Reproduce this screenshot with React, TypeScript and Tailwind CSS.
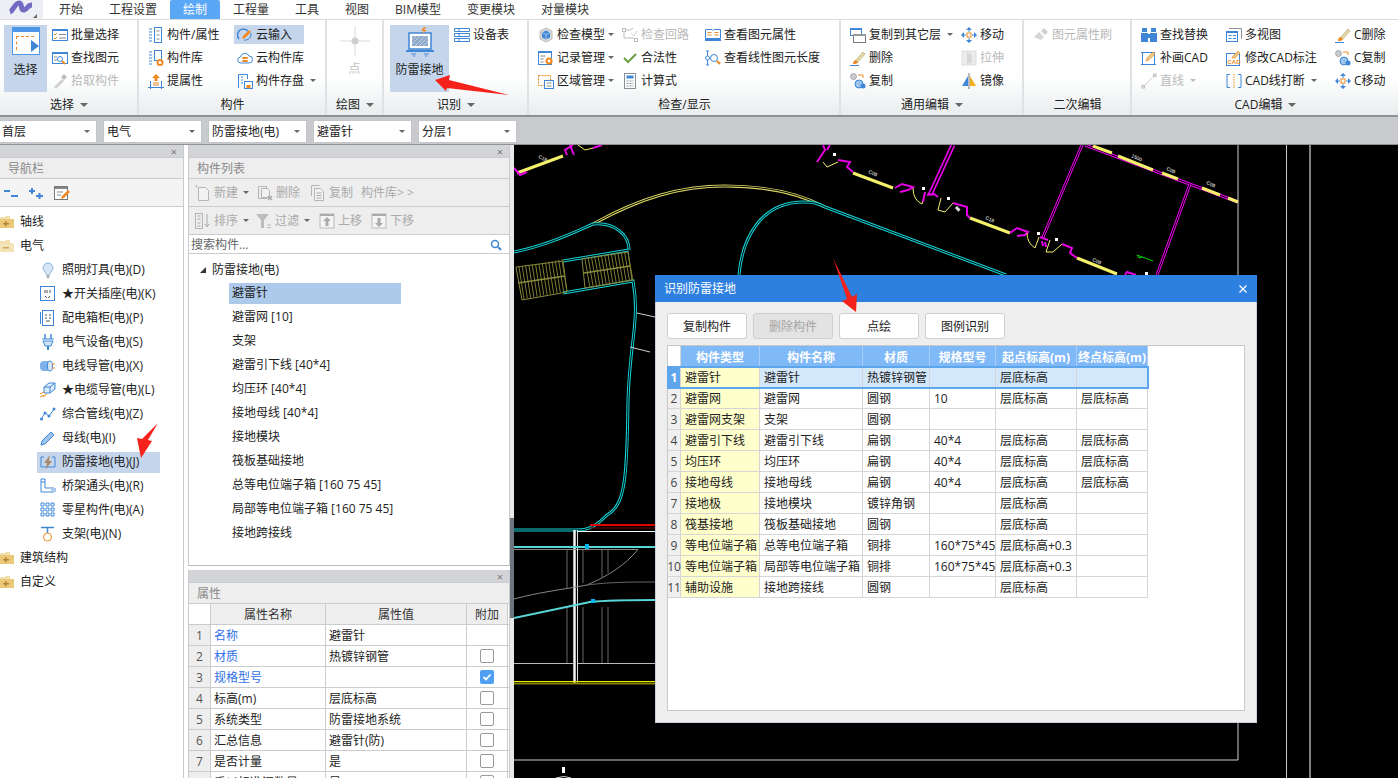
import type { ReactNode } from 'react'

const B = '#3f87d6'
const O = '#ef8a22'
const G = '#bdbdbd'

function S({ children, s = 16 }: { children: ReactNode; s?: number }) {
  return (
    <svg width={s} height={s} viewBox="0 0 16 16" fill="none" className="shrink-0">
      {children}
    </svg>
  )
}

const Move = (
  <S>
    <path d="M8 0l3 3H5zM8 16l-3-3h6zM0 8l3-3v6zM16 8l-3 3V5z" fill={B} />
    <rect x="6" y="6" width="4" height="4" stroke={O} />
    <path d="M3 8h2M11 8h2M8 3v2M8 11v2" stroke={B} />
  </S>
)
const Brush = (
  <S>
    <path d="M5 11L13 2l2 2-8 9z" fill="#e8d9a8" stroke="#a89a70" strokeWidth=".6" />
    <path d="M3 14c0-2 1-4 3-4l2 2c-1 2-3 2-5 2z" fill={O} />
    <path d="M0 15.500h9" stroke={B} />
  </S>
)
const CopyC = (
  <S>
    <circle cx="3.500" cy="3.500" r="3" fill="#c9ccd0" stroke="#888" strokeWidth=".6" />
    <circle cx="9" cy="11" r="4" fill="#9cc4ec" stroke={B} />
    <circle cx="13" cy="13" r="2.500" fill={B} />
    <path d="M8 2h5v3" stroke={O} />
  </S>
)

const icons: Record<string, ReactNode> = {
  batch: (
    <S>
      <rect x=".5" y="2.500" width="15" height="11" fill="#fff" stroke={B} />
      <rect y="2" width="16" height="2" fill={B} />
      <path d="M2 7l1 1 2-2M2 11l1 1 2-2" stroke={O} />
      <path d="M7 7.500h7M7 11h7" stroke="#888" />
    </S>
  ),
  find: (
    <S>
      <rect x=".5" y="2.500" width="15" height="11" fill="#fff" stroke={B} />
      <rect y="2" width="16" height="2" fill={B} />
      <circle cx="8" cy="9" r="2.500" stroke={B} />
      <path d="M10 11l3 3" stroke={O} strokeWidth="2" />
      <path d="M2 7h3M2 10h3" stroke="#888" />
    </S>
  ),
  picker: (
    <S>
      <path d="M2 14l8-8 2 2-8 8z" fill="#d0d0d0" />
      <path d="M9 4l3-3 3 3-3 3z" fill={G} />
    </S>
  ),
  attr: (
    <S>
      <path d="M1 2h3M1 5h3M1 8h3M1 11h3M1 14h3" stroke={B} />
      <rect x="6.500" y=".5" width="7" height="15" stroke={B} />
      <path d="M8.500 4h3M8.500 8h3M8.500 12h3" stroke="#888" />
    </S>
  ),
  lib: (
    <S>
      <path d="M1 2h3M1 5h3M1 8h3M1 11h3M1 14h3" stroke={B} />
      <rect x="6.500" y=".5" width="7" height="10" stroke={B} />
      <circle cx="12" cy="12.500" r="2.500" stroke={O} strokeWidth="2" />
    </S>
  ),
  lift: (
    <S>
      <path d="M8 1l4 4H9.500v3h-3V5H4z" fill={O} />
      <path d="M5 10h6M5 12h6" stroke={O} />
      <path d="M0 14.500h16M2.500 8v8M13.500 8v8" stroke={B} />
    </S>
  ),
  cloudIn: (
    <S>
      <path d="M2 12a6 6 0 0 1 9-8" stroke={B} strokeWidth="1.500" />
      <path d="M14 6a6 6 0 0 1-7 7" stroke={B} />
      <path d="M5 12l1-3 6-6 2 2-6 6z" fill={O} />
    </S>
  ),
  cloudLib: (
    <S>
      <path d="M4 13a3 3 0 0 1-.5-6A4.500 4.500 0 0 1 12 6a3.500 3.500 0 0 1 0 7z" fill="#fff" stroke={B} />
      <rect x="5" y="7" width="6" height="2" rx="1" fill={O} />
      <rect x="5" y="10" width="6" height="2" rx="1" fill={O} />
    </S>
  ),
  save: (
    <S>
      <path d="M1.500 15V1.500h9V6" stroke={B} />
      <path d="M4 4h2M4 7h2M4 10h2" stroke={B} />
      <rect x="7.500" y="8.500" width="8" height="7" fill="#fff" stroke={B} />
      <rect x="9.500" y="12" width="4" height="3" fill={O} />
    </S>
  ),
  device: (
    <S>
      <path d="M.5 1.500h15v3H.5zM.5 6.500h15v3H.5zM.5 11.500h15v3H.5z" stroke={B} />
      <path d="M5 1.500v3M5 6.500v3M5 11.500v3" stroke={B} />
    </S>
  ),
  cube: (
    <S>
      <path d="M8 1l6 3v8l-6 3-6-3V4z" fill="#d5d8dc" stroke={G} />
      <path d="M8 3.500l4 2v5l-4 2-4-2v-5z" fill={B} />
      <path d="M4 5.500l4 2 4-2M8 7.500v5" stroke="#cfe2f7" strokeWidth=".7" />
    </S>
  ),
  loop: (
    <S>
      <rect x=".5" y="1.500" width="3" height="3" stroke={G} />
      <rect x="12.500" y="11.500" width="3" height="3" stroke={G} />
      <path d="M3.500 3H8l3-2M2 5v6h10" stroke={G} />
      <path d="M9 6l3 3 3-5" stroke="#d5d5d5" />
    </S>
  ),
  book: (
    <S>
      <path d="M.5 2.500h6.500l1 1 1-1h6.500v9H.5z" fill="#fff" stroke={B} />
      <path d="M2.500 5.500h4M2.500 8h4M9.500 5.500h4M9.500 8h4" stroke={O} />
      <path d="M0 13h16" stroke={B} strokeWidth="2" />
    </S>
  ),
  record: (
    <S>
      <rect x=".5" y="1.500" width="13" height="13" fill="#fff" stroke={B} />
      <rect y="1" width="14" height="2" fill={B} />
      <path d="M2.500 6h5M2.500 9h3M2.500 12h3" stroke="#888" />
      <circle cx="11" cy="11" r="2.500" stroke={O} strokeWidth="2.200" />
    </S>
  ),
  check: (
    <S>
      <path d="M2 8l4 4 8-8" stroke="#6e9f45" strokeWidth="2" />
    </S>
  ),
  lineLen: (
    <S>
      <circle cx="2.500" cy="8" r="2" stroke={B} />
      <path d="M2.500 1v5M2.500 10v5M1 1h3M1 15h3" stroke={B} />
      <circle cx="9" cy="8" r="3.500" stroke={B} />
      <path d="M12 11l3 3" stroke={O} strokeWidth="2.200" />
    </S>
  ),
  area: (
    <S>
      <rect x=".5" y="2.500" width="12" height="10" stroke={O} strokeDasharray="2 1" />
      <rect x="6.500" y="7.500" width="9" height="8" fill="#fff" stroke={B} />
      <path d="M8.500 10h5M8.500 13h5" stroke="#888" />
    </S>
  ),
  calc: (
    <S>
      <rect x="2.500" y=".5" width="11" height="15" fill="#fff" stroke="#8a9098" />
      <rect x="4.500" y="2.500" width="7" height="3" fill={B} />
      <path d="M4.500 8h2M7.500 8h2M10.500 8h1M4.500 10.500h2M7.500 10.500h2M10.500 10.500h1M4.500 13h2M7.500 13h2M10.500 13h1" stroke="#8a9098" />
    </S>
  ),
  copyLayer: (
    <S>
      <rect x=".5" y="1.500" width="11" height="7" fill="#fff" stroke={B} />
      <rect y="1" width="12" height="2" fill={B} />
      <rect x="3.500" y="7.500" width="12" height="8" fill="#fff" stroke="#777" />
      <rect x="3" y="7" width="13" height="2" fill="#999" />
    </S>
  ),
  move: Move,
  brush: Brush,
  stretch: (
    <S>
      <rect x="1" y="1" width="14" height="14" fill="#ececec" stroke="#ddd" />
      <path d="M6 2l5 3v8l-5 1z" fill="#d8d8d8" />
    </S>
  ),
  copy: CopyC,
  mirror: (
    <S>
      <path d="M7 3v10H1z" fill={B} />
      <path d="M9 3v10h6z" fill="#f1ae1c" />
      <path d="M8 0v16" stroke="#777" />
    </S>
  ),
  paint: (
    <S>
      <path d="M1 10l5-5 5 5-3 3z" fill="#d6d6d6" />
      <path d="M8 4l3-3 4 4-3 3z" fill="#cfcfcf" />
    </S>
  ),
  replace: (
    <S>
      <rect x="1" y="1" width="5" height="4" fill={B} />
      <rect x="10" y="1" width="5" height="4" fill={B} />
      <rect x="0" y="6" width="7" height="9" fill={B} />
      <rect x="9" y="6" width="7" height="9" fill={B} />
      <rect x="6" y="7" width="4" height="4" fill={B} />
    </S>
  ),
  multi: (
    <S>
      <rect x=".5" y="4.500" width="11" height="10" fill="#fff" stroke={B} />
      <rect y="4" width="12" height="2" fill={B} />
      <path d="M3 1.500h12.500V12" stroke="#8a9098" />
      <path d="M2.500 8.500h3M2.500 11.500h3M7 8.500h3M7 11.500h3" stroke={B} />
    </S>
  ),
  patch: (
    <S>
      <rect x="1.500" y="2.500" width="12" height="12" stroke={B} />
      <path d="M0 2.500h3M0 14.500h3M12 14.500h3" stroke={B} />
      <path d="M5 11l1-3 6-6 2 2-6 6z" fill="#e8c887" stroke={O} strokeWidth=".6" />
    </S>
  ),
  editCad: (
    <S>
      <rect x=".5" y="3.500" width="13" height="12" fill="#fff" stroke={B} />
      <path d="M6 8l1-2 5-5 2 2-5 5z" fill="#e8c887" stroke={O} strokeWidth=".6" />
      <text x="1.500" y="14" fontSize="6" fontWeight="700" fill={O} fontFamily="Liberation Sans">CAD</text>
    </S>
  ),
  breakLine: (
    <S>
      <path d="M4 1.500H1v13h3M12 1.500h3v13h-3" stroke={B} />
      <path d="M8 1v14" stroke={O} strokeDasharray="1.500 1" />
    </S>
  ),
  line: (
    <S>
      <path d="M2 14L14 2" stroke="#cfcfcf" />
      <rect x="1" y="12.500" width="2.500" height="2.500" stroke={G} />
      <rect x="12.500" y="1" width="2.500" height="2.500" stroke={G} />
    </S>
  ),
  bulb: (
    <S>
      <path d="M8 1a5 5 0 0 0-3 9c1 1 1 2 1.500 3h3c.5-1 .5-2 1.500-3a5 5 0 0 0-3-9z" fill="#d7e6f7" stroke="#8db4dc" />
      <path d="M6.500 14h3M7 15.500h2" stroke="#888" />
    </S>
  ),
  socket: (
    <S>
      <rect x=".5" y=".5" width="14" height="14" fill="#fff" stroke={B} />
      <path d="M5 4v3M7 4v3M10 4v3M5 10l2 2M10 10l-2 2" stroke="#555" />
    </S>
  ),
  box: (
    <S>
      <rect x="2.500" y=".5" width="11" height="15" fill="#fff" stroke={B} />
      <path d="M0.500 2v12" stroke={B} />
      <path d="M5 5h2M9 5h2M5 8h2M9 8h2M6 11h4" stroke="#555" />
    </S>
  ),
  plug: (
    <S>
      <path d="M5 0v5M11 0v5" stroke={B} strokeWidth="1.500" />
      <path d="M2 5h12M3 7h10l-2 5H5z" stroke={B} fill="#cfe2f7" />
      <path d="M8 12v4" stroke={B} strokeWidth="2" />
    </S>
  ),
  conduit: (
    <S>
      <rect x="0" y="3" width="11" height="10" rx="4" fill="#7fb2e8" />
      <ellipse cx="10" cy="8" rx="2.500" ry="5" fill="#dbe9f8" stroke={B} />
      <path d="M12 6h3M12 10h3" stroke={O} />
    </S>
  ),
  cable: (
    <S>
      <path d="M4 5l5-4h6v6l-5 4H4z" fill="#dbe9f8" stroke={B} />
      <path d="M4 5h6v6M10 5l5-4" stroke={B} />
      <path d="M0 15l4-2M0 12l4-2M3 15l4-3" stroke={O} />
    </S>
  ),
  poly: (
    <S>
      <path d="M1 13l4-6 4 3 5-7" stroke={B} />
      <circle cx="1.500" cy="13" r="1.500" fill={B} />
      <circle cx="5" cy="7" r="1.500" fill={B} />
      <circle cx="9" cy="10" r="1.500" fill={B} />
      <circle cx="14" cy="3" r="1.500" fill={B} />
    </S>
  ),
  pen: (
    <S>
      <path d="M1 15l1-4 9-9 3 3-9 9z" fill="#9cc4ec" stroke={B} />
    </S>
  ),
  ground: (
    <S>
      <path d="M1 3h3M12 3h3M1 3v10h14V3" stroke={B} />
      <path d="M10 1L4 9h3l-1 6 6-8H9z" fill="#a98a6a" />
    </S>
  ),
  bridge: (
    <S>
      <path d="M1 1h4v9h9v4H1z" stroke={B} fill="#fff" />
      <path d="M1 4h4M12 10v4" stroke={B} />
      <rect x="11" y="10" width="5" height="4" fill="#a8c9ec" />
    </S>
  ),
  grid: (
    <S>
      <path d="M1 1h3v3H1zM6 1h3v3H6zM11 1h3v3h-3zM1 6h3v3H1zM6 6h3v3H6zM11 6h3v3h-3zM1 11h3v3H1zM6 11h3v3H6zM11 11h3v3h-3z" stroke={B} />
    </S>
  ),
  support: (
    <S>
      <path d="M1 1.500h13M7.500 2v5" stroke={B} strokeWidth="1.500" />
      <circle cx="7.500" cy="11" r="4" stroke={O} />
    </S>
  ),
  newDoc: (
    <S>
      <path d="M3.500 2.500h7l3 3v10h-10z" fill="#f2f2f2" stroke="#b5b5b5" />
      <path d="M0 1h3M1.500 0v3" stroke="#c5c5c5" />
    </S>
  ),
  delDoc: (
    <S>
      <path d="M1.500 1.500h8v12h-8z" stroke="#b5b5b5" />
      <path d="M4.500 3.500h6l2 2v7h-8z" fill="#f2f2f2" stroke="#b5b5b5" />
      <path d="M11 11l4 4M15 11l-4 4" stroke="#aaa" strokeWidth="1.500" />
    </S>
  ),
  copyDoc: (
    <S>
      <path d="M1.500 11V.5h8" stroke="#b5b5b5" />
      <path d="M4.500 3.500h6l3 3v9h-9z" fill="#f2f2f2" stroke="#b5b5b5" />
      <path d="M6.500 8h5M6.500 10.500h5M6.500 13h5" stroke="#aaa" />
    </S>
  ),
  sort: (
    <S>
      <rect x=".5" y=".5" width="7" height="15" stroke="#b5b5b5" />
      <path d="M2.500 3h3M2.500 6h3M2.500 10h3M2.500 13h3" stroke="#aaa" />
      <path d="M12 1v12M10 11l2 3 2-3" stroke="#aaa" />
    </S>
  ),
  filter: (
    <S>
      <path d="M0 1h13L8 7v8H5V7z" fill="#bcbcbc" />
      <path d="M11 12h4M11 14.500h4" stroke="#bbb" />
    </S>
  ),
  up: (
    <S>
      <rect x="1" y="1" width="14" height="14" fill="#f5f5f5" stroke="#bbb" />
      <rect x="1" y="1" width="14" height="2" fill="#aaa" />
      <path d="M8 4l4 4H9.500v5h-3V8H4z" fill="#aaa" />
    </S>
  ),
  down: (
    <S>
      <rect x="1" y="1" width="14" height="14" fill="#f5f5f5" stroke="#bbb" />
      <rect x="1" y="1" width="14" height="2" fill="#aaa" />
      <path d="M8 14l4-4H9.500V5h-3v5H4z" fill="#aaa" />
    </S>
  ),
}

function Caret({ light, big }: { light?: boolean; big?: boolean }) {
  return (
    <span
      className={`inline-block h-0 w-0 border-x-transparent ${big ? 'border-x-[4px] border-t-[4px]' : 'border-x-[3px] border-t-[3px]'} ${
        light ? 'border-t-[#bbb]' : 'border-t-[#666]'
      }`}
    />
  )
}

type ItemProps = { icon: string; label: string; off?: boolean; caret?: boolean; near?: boolean; active?: boolean }

function Item({ icon, label, off, caret, near, active }: ItemProps) {
  return (
    <div className={`flex h-[23px] items-center whitespace-nowrap ${off ? 'text-[#b9b9b9]' : 'text-[#222]'}`}>
      <div className={`flex h-[19px] items-center gap-[3px] ${active ? '-ml-[3px] w-[70px] bg-[#c5d6ec] pl-[3px]' : ''}`}>
        {icons[icon]}
        <span>{label}</span>
        {caret && (
          <span className={`flex items-center ${near ? 'ml-0' : 'ml-[3px]'}`}>
            <Caret light={off} />
          </span>
        )}
      </div>
    </div>
  )
}

function Group({ title, caret, className, children }: { title: string; caret?: boolean; className: string; children: ReactNode }) {
  return (
    <div className={`flex shrink-0 flex-col ${className}`}>
      <div className="flex flex-1 pt-[3px]">{children}</div>
      <div className="-mr-[1px] flex h-[23px] items-center justify-center gap-[6px] pt-[3px] text-[#222]">
        {title}
        {caret && <Caret big />}
      </div>
    </div>
  )
}

function BigButton({ label, className, children }: { label: string; className: string; children: ReactNode }) {
  return (
    <div className={`mt-[2px] flex h-[67px] flex-col items-center bg-[#c5d6ec] ${className}`}>
      {children}
      <span className="mt-auto mb-[16px] text-[#222]">{label}</span>
    </div>
  )
}

function Ribbon() {
  const divider = 'border-r-2 border-r-[#dfe2e4]'
  return (
    <div className="flex h-[97px] border-b-2 border-b-[#8f9193] bg-gradient-to-b from-white from-60% to-[#e9edee]">
      <Group title="选择" caret className={`w-[139px] ${divider}`}>
        <BigButton label="选择" className="ml-[4px] w-[43px]">
          <div className="mt-[2px] h-[28px] w-[28px] border border-[#4d97e6] bg-white">
            <div className="h-[4px] bg-[#4d97e6]" />
            <div className="relative mt-[4px] ml-[3px] h-[14px] w-[18px] border-t border-l border-dashed border-[#ef8a22]">
              <div className="absolute top-[3px] left-[14px] h-0 w-0 border-y-[6px] border-l-[8px] border-y-transparent border-l-[#3f87d6]" />
            </div>
          </div>
        </BigButton>
        <div className="ml-[5px]">
          <Item icon="batch" label="批量选择" />
          <Item icon="find" label="查找图元" />
          <Item icon="picker" label="拾取构件" off />
        </div>
      </Group>
      <Group title="构件" className={`w-[188px] ${divider}`}>
        <div className="ml-[9px] w-[89px]">
          <Item icon="attr" label="构件/属性" />
          <Item icon="lib" label="构件库" />
          <Item icon="lift" label="提属性" />
        </div>
        <div>
          <Item icon="cloudIn" label="云输入" active />
          <Item icon="cloudLib" label="云构件库" />
          <Item icon="save" label="构件存盘" caret />
        </div>
      </Group>
      <Group title="绘图" caret className={`w-[57px] ${divider}`}>
        <div className="flex w-full flex-col items-center pt-[3px]">
          <svg width="30" height="30" viewBox="0 0 30 30" fill="none">
            <path d="M15 0v30M0 15h30" stroke="#d9d9d9" />
            <circle cx="15" cy="15" r="3.500" fill="#cfcfcf" />
          </svg>
          <span className="mt-[7px] text-[#c4c4c4]">点</span>
        </div>
      </Group>
      <Group title="识别" caret className={`w-[145px] ${divider}`}>
        <BigButton label="防雷接地" className="ml-[6px] w-[59px]">
          <svg width="30" height="30" viewBox="0 0 30 30" fill="none" className="mt-[2px]">
            <path d="M4 6h22v16H4z" fill="#fff" stroke="#3f87d6" strokeWidth="1.500" />
            <path d="M7 9h16v10H7z" fill="#8fa9c9" />
            <path d="M7 13l4-4M7 17l8-8M10 19l10-10M14 19l9-9M18 19l5-5" stroke="#cfdcec" strokeWidth=".8" />
            <path d="M1 23h28v2H1z" fill="#3f87d6" />
            <path d="M6 27h5M19 27h5M8 29h2M20 29h2" stroke="#3f87d6" />
            <path d="M19 0l-3 4h3l-2 3 5-4h-3l2-3z" fill="#ef8a22" />
          </svg>
        </BigButton>
        <div className="ml-[5px]">
          <Item icon="device" label="设备表" />
        </div>
      </Group>
      <Group title="检查/显示" className={`w-[312px] ${divider}`}>
        <div className="ml-[9px] w-[84px]">
          <Item icon="cube" label="检查模型" caret near />
          <Item icon="record" label="记录管理" caret near />
          <Item icon="area" label="区域管理" caret near />
        </div>
        <div className="w-[83px]">
          <Item icon="loop" label="检查回路" off />
          <Item icon="check" label="合法性" />
          <Item icon="calc" label="计算式" />
        </div>
        <div>
          <Item icon="book" label="查看图元属性" />
          <Item icon="lineLen" label="查看线性图元长度" />
        </div>
      </Group>
      <Group title="通用编辑" caret className={`w-[183px] ${divider}`}>
        <div className="ml-[9px] w-[111px]">
          <Item icon="copyLayer" label="复制到其它层" caret />
          <Item icon="brush" label="删除" />
          <Item icon="copy" label="复制" />
        </div>
        <div>
          <Item icon="move" label="移动" />
          <Item icon="stretch" label="拉伸" off />
          <Item icon="mirror" label="镜像" />
        </div>
      </Group>
      <Group title="二次编辑" className={`w-[108px] ${divider}`}>
        <div className="ml-[9px]">
          <Item icon="paint" label="图元属性刷" off />
        </div>
      </Group>
      <Group title="CAD编辑" caret className="w-[266px]">
        <div className="ml-[9px] w-[85px]">
          <Item icon="replace" label="查找替换" />
          <Item icon="patch" label="补画CAD" />
          <Item icon="line" label="直线" off caret />
        </div>
        <div className="w-[109px]">
          <Item icon="multi" label="多视图" />
          <Item icon="editCad" label="修改CAD标注" />
          <Item icon="breakLine" label="CAD线打断" caret />
        </div>
        <div>
          <Item icon="brush" label="C删除" />
          <Item icon="copy" label="C复制" />
          <Item icon="move" label="C移动" />
        </div>
      </Group>
    </div>
  )
}

function Select({ label }: { label: string }) {
  return (
    <div className="flex h-[23px] w-[99px] items-center justify-between border border-[#c3c5c8] bg-white pr-[6px] pl-[3px] text-[#222]">
      {label}
      <Caret />
    </div>
  )
}

function PanelHead({ title }: { title: string }) {
  return (
    <>
      <div className="flex h-[12px] shrink-0 items-center justify-end bg-[#d2d4d8] pr-[6px] text-[11px] leading-none text-[#777]">×</div>
      <div className="flex h-[22px] shrink-0 items-center border-y border-y-[#c9cbce] bg-[#eeeeee] pt-[2px] pl-[8px] text-[#8a8a8a]">{title}</div>
    </>
  )
}

function Folder({ open }: { open?: boolean }) {
  return (
    <svg width="15" height="14" viewBox="0 0 15 14" className="shrink-0">
      <path d="M0 2h5l1-1h4v3H0z" fill="#f3dfae" />
      <path d="M0 4h14v9H0z" fill={open ? '#f5e3b8' : '#ecc879'} />
      <path d={open ? 'M3 8h6v1.500H3z' : 'M3 8h6v1.500H3zM5.200 6h1.500v5.500H5.200z'} fill={open ? '#c9a45a' : '#b5863a'} />
    </svg>
  )
}

const navRows = [
  ['bulb', '照明灯具(电)(D)'],
  ['socket', '★开关插座(电)(K)'],
  ['box', '配电箱柜(电)(P)'],
  ['plug', '电气设备(电)(S)'],
  ['conduit', '电线导管(电)(X)'],
  ['cable', '★电缆导管(电)(L)'],
  ['poly', '综合管线(电)(Z)'],
  ['pen', '母线(电)(I)'],
  ['ground', '防雷接地(电)(J)'],
  ['bridge', '桥架通头(电)(R)'],
  ['grid', '零星构件(电)(A)'],
  ['support', '支架(电)(N)'],
]

function FolderRow({ label, open }: { label: string; open?: boolean }) {
  return (
    <div className="flex h-[24px] items-center gap-[5px]">
      <Folder open={open} />
      {label}
    </div>
  )
}

function NavPanel() {
  return (
    <div className="flex w-[184px] shrink-0 flex-col border-r border-r-[#c9cbce] bg-white">
      <PanelHead title="导航栏" />
      <div className="flex h-[28px] shrink-0 items-center gap-[8px] border-b border-b-[#c9cbce] bg-[#f4f4f4] pl-[4px]">
        <svg width="15" height="12" viewBox="0 0 15 12"><path d="M0 3h6v2H0zM7 8h7v2H7z" fill="#3f87d6" /></svg>
        <svg width="15" height="12" viewBox="0 0 15 12" className="ml-[2px]"><path d="M0 3h6v2H0zM2 1h2v6H2zM7 8h7v2H7zM9.500 6h2v6h-2z" fill="#3f87d6" /></svg>
        <svg width="16" height="14" viewBox="0 0 16 14" className="ml-[2px]"><rect x=".5" y=".5" width="13" height="13" fill="#fff" stroke="#777" /><path d="M1 1h12v2H1z" fill="#888" /><path d="M3 6h6M3 9h4" stroke="#888" /><path d="M7 13l1-3 6-6 2 2-6 6z" fill="#ef8a22" /></svg>
      </div>
      <div className="pt-[3px] text-[#222]">
        <FolderRow label="轴线" />
        <FolderRow label="电气" open />
        {navRows.map(([icon, label], i) => (
          <div key={label} className="flex h-[24px] items-center pl-[37px]">
            <div className={`flex h-[21px] w-[123px] items-center gap-[7px] pl-[4px] whitespace-nowrap ${i === 8 ? 'bg-[#c5d6ec]' : ''}`}>
              <span className="flex w-[14px] justify-center">{icons[icon]}</span>
              {label}
            </div>
          </div>
        ))}
        <FolderRow label="建筑结构" />
        <FolderRow label="自定义" />
      </div>
    </div>
  )
}

function Tool({ icon, label, caret, className }: { icon?: string; label: string; caret?: boolean; className: string }) {
  return (
    <div className={`flex items-center gap-[3px] whitespace-nowrap text-[#aaa] ${className}`}>
      {icon && icons[icon]}
      {label}
      {caret && <span className="ml-[2px] flex"><Caret /></span>}
    </div>
  )
}

const compRows = [
  '避雷针',
  '避雷网 [10]',
  '支架',
  '避雷引下线 [40*4]',
  '均压环 [40*4]',
  '接地母线 [40*4]',
  '接地模块',
  '筏板基础接地',
  '总等电位端子箱 [160 75 45]',
  '局部等电位端子箱 [160 75 45]',
  '接地跨接线',
]

function ComponentPanel() {
  return (
    <div className="flex h-[421px] shrink-0 flex-col border-x border-b border-x-[#c9cbce] border-b-[#b9bbbe] bg-white">
      <PanelHead title="构件列表" />
      <div className="flex h-[28px] shrink-0 items-center border-b border-b-[#c9cbce] bg-[#eeeeee] pl-[6px]">
        <Tool icon="newDoc" label="新建" caret className="" />
        <Tool icon="delDoc" label="删除" className="ml-[8px]" />
        <Tool icon="copyDoc" label="复制" className="ml-[10px]" />
        <Tool label="构件库> >" className="ml-[8px]" />
      </div>
      <div className="flex h-[28px] shrink-0 items-center border-b border-b-[#c9cbce] bg-[#eeeeee] pl-[6px]">
        <Tool icon="sort" label="排序" caret className="" />
        <Tool icon="filter" label="过滤" caret className="ml-[7px]" />
        <Tool icon="up" label="上移" className="ml-[9px]" />
        <Tool icon="down" label="下移" className="ml-[9px]" />
      </div>
      <div className="flex h-[19px] shrink-0 items-center justify-between border-b border-b-[#c9cbce] bg-white pt-[1px] pr-[7px] pl-[2px] text-[#666]">
        搜索构件...
        <svg width="12" height="12" viewBox="0 0 12 12" fill="none"><circle cx="5" cy="5" r="3.500" stroke="#3f87d6" strokeWidth="1.500" /><path d="M8 8l3 3" stroke="#3f87d6" strokeWidth="2" /></svg>
      </div>
      <div className="pt-[4px] text-[#222]">
        <div className="flex h-[23px] items-center pl-[11px]">
          <span className="mr-[6px] h-0 w-0 border-b-[6px] border-l-[6px] border-b-[#333] border-l-transparent" />
          防雷接地(电)
        </div>
        {compRows.map((label, i) => (
          <div key={label} className="flex h-[24px] items-center pl-[40px]">
            <div className={`flex h-[21px] w-[172px] items-center pl-[3px] whitespace-nowrap ${i === 0 ? 'bg-[#aecaea]' : ''}`}>{label}</div>
          </div>
        ))}
      </div>
    </div>
  )
}

const propRows = [
  ['名称', '避雷针', ''],
  ['材质', '热镀锌钢管', 'off'],
  ['规格型号', '', 'on'],
  ['标高(m)', '层底标高', 'off'],
  ['系统类型', '防雷接地系统', 'off'],
  ['汇总信息', '避雷针(防)', 'off'],
  ['是否计量', '是', 'off'],
  ['乘以标准间数量', '是', 'off'],
]

function Check({ state }: { state: string }) {
  if (!state) return null
  if (state === 'on') {
    return (
      <span className="flex h-[14px] w-[14px] items-center justify-center rounded-[2px] bg-[#4f9ff2]">
        <svg width="10" height="10" viewBox="0 0 10 10" fill="none"><path d="M1.500 5l2.500 2.500 4.500-5" stroke="#fff" strokeWidth="1.800" /></svg>
      </span>
    )
  }
  return <span className="h-[14px] w-[14px] rounded-[2px] border border-[#9a9a9a] bg-white" />
}

function PropPanel() {
  return (
    <div className="flex min-h-0 flex-1 flex-col overflow-hidden border-x border-x-[#c9cbce] bg-white">
      <PanelHead title="属性" />
      <div className="flex h-[21px] shrink-0 border-b border-b-[#ccc] pt-0 text-[#333]">
        <div className="w-[22px] border-r border-r-[#ccc] bg-white" />
        <div className="flex w-[115px] items-center justify-center border-r border-r-[#ccc] bg-[#eeeeee] pt-[2px]">属性名称</div>
        <div className="flex w-[141px] items-center justify-center border-r border-r-[#ccc] bg-[#eeeeee] pt-[2px]">属性值</div>
        <div className="flex w-[41px] items-center justify-center border-r border-r-[#ccc] bg-[#eeeeee] pt-[2px]">附加</div>
      </div>
      {propRows.map(([name, value, state], i) => (
        <div key={name} className="flex h-[21px] shrink-0 border-b border-b-[#ccc] text-[#222]">
          <div className="flex w-[22px] items-center justify-center border-r border-r-[#ccc] bg-[#eeeeee] pt-[2px] text-[#555]">{i + 1}</div>
          <div className={`flex w-[115px] items-center border-r border-r-[#ccc] pt-[2px] pl-[3px] whitespace-nowrap ${i < 3 ? 'text-[#2f6fe8]' : ''}`}>{name}</div>
          <div className="flex w-[141px] items-center border-r border-r-[#ccc] pt-[2px] pl-[3px]">{value}</div>
          <div className="flex w-[41px] items-center justify-center border-r border-r-[#ccc]"><Check state={state} /></div>
        </div>
      ))}
    </div>
  )
}

// CAD drawing, page coordinates
function Dbl({ d, c = '#14d3d6', w = 3 }: { d: string; c?: string; w?: number }) {
  return (
    <>
      <path d={d} stroke={c} strokeWidth={w} />
      <path d={d} stroke="#000" strokeWidth={w / 3} />
    </>
  )
}

function CadLabel({ x, y, t }: { x: number; y: number; t: string }) {
  return (
    <text x={x} y={y} fontSize="5" fill="#fff" fontFamily="Liberation Sans" transform={`rotate(24 ${x} ${y})`}>{t}</text>
  )
}

function Canvas() {
  const hatch: string[] = []
  for (let i = 0; i < 14; i++) {
    const x = 519 + i * 3.300
    hatch.push(`M${x} ${267 - i * 0.6}L${x + 5} ${299 - i * 0.6}`)
    const x2 = 585 + i * 3.300
    hatch.push(`M${x2} ${259 - i * 0.55}L${x2 + 5} ${288 - i * 0.55}`)
  }
  const wall = '#e600e6'
  const door = '#f5f06a'
  const dots = [[922, 187], [947, 197], [1037, 232], [1055, 238], [833, 153], [1145, 272]]
  return (
    <div className="min-w-0 flex-1 bg-black">
      <svg width="884" height="633" viewBox="514 145 884 633" fill="none" className="block">
        <path d="M1238 145v615H514" stroke="#d0d0d0" />
        <path d="M1286.500 145v633" stroke="#c8c8c8" />
        <path d="M1310 145v633" stroke="#808080" strokeWidth="2" />

        <Dbl d="M514 252C545 246 570 234 593 224" />
        <Dbl d="M593 224C640 198 680 186 725 186C770 186 800 194 825 207" c="#d8d463" />
        <Dbl d="M825 207L1006 275" />
        <Dbl d="M739 275C742 240 760 201 805 202C812 202 820 204 825 207" />
        <Dbl d="M593 224C615 222 629 235 629 250" />
        <Dbl d="M629 250L563 261" />
        <Dbl d="M563 293L633 281C640 320 630 340 628 400C627 480 625 505 607 515C597 525 590 530 577 530L514 530" />
        <path d="M637 313L655 317M630 347L650 352" stroke="#cfcfcf" />

        <path d="M516 267L563 261L567 292L522 300ZM582 259L628 252L632 280L585 288Z" stroke="#8b8b3c" />
        <path d={hatch.join('')} stroke="#7d7d35" />
        <path d="M518 283L565 276M584 273L630 266" stroke="#8b8b3c" strokeWidth="1.500" />

        {/* lower block */}
        <path d="M590 525H655" stroke="#e00000" strokeWidth="2" />
        <path d="M590 528H655" stroke="#700000" />
        <path d="M578 531.500H655" stroke="#fff" />
        <path d="M574.500 530V684" stroke="#f2f2f2" strokeWidth="2.500" />
        <path d="M577.500 530V684" stroke="#ddd" />
        <path d="M514 549.500H577M578 549.500H638C625 565 610 575 587 585C560 590 540 592 514 599" stroke="#888" />
        <path d="M587 585C610 582 630 582 655 582" stroke="#666" />
        <path d="M567 550V588M567 607V663M583 550V583M583 607V663M602 550V578M602 607V663M608 550V573M608 607V663" stroke="#666" />
        <path d="M514 547H655" stroke="#59d6d8" strokeWidth="2" />
        <path d="M514 618L590 602C610 600 640 600 655 600" stroke="#59d6d8" strokeWidth="2" />
        <rect x="585" y="544" width="4" height="5" fill="#00b4f0" />
        <rect x="591" y="599" width="4" height="4" fill="#00b4f0" />
        <path d="M514 663.500H573M578 663.500H655" stroke="#bbb" />
        <path d="M514 681.500H655" stroke="#f2ee00" />
        <path d="M514 683.500H655" stroke="#858500" strokeWidth="2" />
        <rect x="562" y="767" width="3" height="6" fill="#fff" />
        <path d="M556 778q8 -3 15 0" stroke="#ddd" />

        {/* rooms */}
        <path d="M517 173L563 156" stroke={door} strokeWidth="3" />
        <path d="M514 168l6 7 7 -3M567 155l-2 -5 8 -5M574 155l-4 -10M593 148l9 -3" stroke={wall} strokeWidth="2" />
        <path d="M578 145l7 5 8 -2" stroke={door} />

        <path d="M817 162l8 -12 -2 -5M830 145l-3 5M838 160l12 2 -3 5 6 5" stroke={wall} strokeWidth="2" />
        <path d="M823 162l4 5 11 -5" stroke={door} />
        <path d="M853 173L893 188" stroke={door} strokeWidth="3" />
        <path d="M895 188l7 -4 11 3 -5 3 -8 2" stroke={wall} strokeWidth="2" />
        <path d="M913 188q0 12 9 16l3 -11" stroke={door} />
        <Dbl d="M930 195L953 145" c={wall} w={5} />
        <path d="M925 192l-2 10M927 195l7 -1 4 3" stroke={wall} strokeWidth="2" />
        <path d="M941 198l-3 12l7 2l8 -9" stroke={door} />
        <path d="M953 203l14 4v8l3 3" stroke={wall} strokeWidth="2" />
        <rect x="957" y="206" width="5" height="3" fill="#ddd" transform="rotate(45 957 206)" />
        <path d="M970 218L1010 233" stroke={door} strokeWidth="3" />
        <path d="M1010 233l7 -5 11 4 -3 3 -8 1" stroke={wall} strokeWidth="2" />
        <path d="M1027 233q0 10 8 15l4 -11" stroke={door} />
        <Dbl d="M1043 237L1082 145" c={wall} />
        <path d="M1040 237l8 3M1042 241l1 5M1045 242l1 5" stroke={wall} strokeWidth="2" />
        <path d="M1050 240l-4 12h7l9 -8" stroke={door} />
        <path d="M1062 244l10 4 -2 5 7 5" stroke={wall} strokeWidth="2" />
        <path d="M1077 258L1117 274" stroke={door} strokeWidth="3" />
        <path d="M1125 275l2 -3 9 3" stroke={wall} strokeWidth="2" />
        <Dbl d="M1085 145L1238 202" c={wall} />
        <path d="M1093 146L1112 153M1118 156L1153 170M1162 173L1178 179M1202 188L1220 195M1228 198L1238 202" stroke={door} strokeWidth="3" />
        <Dbl d="M1190 184L1157 275" c={wall} />
        <path d="M1137 255l16 6M1137 255l2 3 3 -1" stroke="#00d000" />
        {dots.map(([x, y]) => (
          <rect key={x} x={x} y={y} width="3" height="3" fill="#fff" />
        ))}
        <CadLabel x={1131} y={157} t="1500" />
        <CadLabel x={1166} y={170} t="C09" />
        <CadLabel x={1206} y={184} t="C09" />
        <CadLabel x={985} y={219} t="C18" />
        <CadLabel x={1092} y={261} t="C09" />
        <CadLabel x={538} y={158} t="C18" />
        <CadLabel x={868} y={173} t="C09" />
      </svg>
    </div>
  )
}

const dlgRows = [
  ['避雷针', '避雷针', '热镀锌钢管', '', '层底标高', ''],
  ['避雷网', '避雷网', '圆钢', '10', '层底标高', '层底标高'],
  ['避雷网支架', '支架', '圆钢', '', '', ''],
  ['避雷引下线', '避雷引下线', '扁钢', '40*4', '层底标高', '层底标高'],
  ['均压环', '均压环', '扁钢', '40*4', '层底标高', '层底标高'],
  ['接地母线', '接地母线', '扁钢', '40*4', '层底标高', '层底标高'],
  ['接地极', '接地模块', '镀锌角钢', '', '层底标高', ''],
  ['筏基接地', '筏板基础接地', '圆钢', '', '层底标高', ''],
  ['等电位端子箱', '总等电位端子箱', '铜排', '160*75*45', '层底标高+0.3', ''],
  ['等电位端子箱', '局部等电位端子箱', '铜排', '160*75*45', '层底标高+0.3', ''],
  ['辅助设施', '接地跨接线', '圆钢', '', '层底标高', ''],
]
const dlgHead = ['构件类型', '构件名称', '材质', '规格型号', '起点标高(m)', '终点标高(m)']
const dlgCols = ['w-[79px]', 'w-[103px]', 'w-[67px]', 'w-[66px]', 'w-[81px]', 'w-[71px]']

function DlgButton({ label, off }: { label: string; off?: boolean }) {
  return (
    <div
      className={`flex h-[26px] w-[80px] items-center justify-center rounded-[3px] border border-[#cfcfcf] pt-[2px] ${
        off ? 'bg-[#e3e3e3] text-[#a5a5a5]' : 'bg-white text-[#222]'
      }`}
    >
      {label}
    </div>
  )
}

function Dialog() {
  return (
    <div className="absolute top-[275px] left-[655px] flex h-[448px] w-[602px] flex-col border-r border-b border-l border-[#c9d0dc] bg-[#eeeeee]">
      <div className="-mx-[1px] flex h-[27px] shrink-0 items-center justify-between bg-[#2e80e0] pr-[9px] pl-[9px] text-white">
        识别防雷接地
        <svg width="10" height="10" viewBox="0 0 10 10" fill="none"><path d="M1.500 1.500l7 7M8.500 1.500l-7 7" stroke="#fff" strokeWidth="1.300" /></svg>
      </div>
      <div className="flex gap-[6px] pt-[11px] pl-[11px]">
        <DlgButton label="复制构件" />
        <DlgButton label="删除构件" off />
        <DlgButton label="点绘" />
        <DlgButton label="图例识别" />
      </div>
      <div className="mx-[11px] mt-[6px] h-[366px] border border-[#c8c8c8] bg-white text-[#222]">
        <div className="flex h-[21px] font-bold text-white">
          <div className="w-[13px] border-r border-b border-[#d5d5d5] bg-white" />
          {dlgHead.map((h, i) => (
            <div key={h} className={`flex items-center justify-center border-r border-r-[#a8cdf5] bg-[#7fb9f8] pt-[2px] whitespace-nowrap ${dlgCols[i]}`}>{h}</div>
          ))}
        </div>
        {dlgRows.map((row, r) => (
          <div
            key={row[1] + r}
            className={`flex h-[21px] w-fit ${r === 0 ? 'relative z-10 outline-2 -outline-offset-1 outline-[#5ea6ec]' : ''}`}
          >
            <div className={`flex w-[13px] items-center justify-center border-r border-b border-[#d5d5d5] pt-[2px] ${r === 0 ? 'bg-[#5ea6ec] font-bold text-white' : 'bg-[#f0f0f0] text-[#444]'}`}>
              {r + 1}
            </div>
            {row.map((cell, c) => (
              <div
                key={c}
                className={`flex items-center overflow-hidden border-r border-b border-[#d5d5d5] pt-[2px] pl-[4px] whitespace-nowrap ${dlgCols[c]} ${
                  c === 0 ? 'bg-[#ffffcc]' : r === 0 ? 'bg-[#d4e8fc]' : 'bg-white'
                }`}
              >
                {cell}
              </div>
            ))}
          </div>
        ))}
      </div>
    </div>
  )
}

export default function App() {
  return (
    <div className="relative flex h-[778px] w-[1398px] flex-col overflow-hidden bg-white font-['Open_Sans','Noto_Sans_CJK_SC',sans-serif] text-[12px] leading-none">
      {/* tabs */}
      <div className="flex h-[20px] shrink-0 items-end border-b border-b-[#dcdcdc] bg-white text-[#333]">
        <div className="relative mr-[3px] flex h-[19px] w-[43px] items-start justify-center bg-[#eeeef5]">
          <svg width="30" height="16" viewBox="0 0 30 16" fill="none"><path d="M3 12c3-1 5-9 9-9s1 8 5 7 3-5 8-5" stroke="#5a55b8" strokeWidth="5" opacity=".85" /></svg>
          <span className="absolute right-[6px] bottom-[1px] h-0 w-0 border-b-[4px] border-l-[4px] border-b-[#666] border-l-transparent" />
        </div>
        {['开始', '工程设置', '绘制', '工程量', '工具', '视图', 'BIM模型', '变更模块', '对量模块'].map((t) => (
          <div key={t} className={`flex h-[19px] items-center px-[13px] pt-[1px] ${t === '绘制' ? 'rounded-t-[2px] bg-[#5aa7f5] text-white' : ''}`}>{t}</div>
        ))}
      </div>
      <Ribbon />
      {/* combo row */}
      <div className="flex h-[28px] shrink-0 items-start gap-[6px] border-b border-b-[#8f9193] bg-[#c8cacd] pt-[3px] -indent-0">
        <div className="-ml-[2px]">
          <Select label="首层" />
        </div>
        {['电气', '防雷接地(电)', '避雷针', '分层1'].map((s) => (
          <Select key={s} label={s} />
        ))}
      </div>
      {/* main */}
      <div className="flex min-h-0 flex-1">
        <NavPanel />
        <div className="flex w-[326px] shrink-0 flex-col bg-white pl-[4px]">
          <div className="flex h-full w-[322px] flex-col">
            <ComponentPanel />
            <div className="h-[4px] shrink-0 bg-white" />
            <PropPanel />
          </div>
        </div>
        <div className="flex w-[4px] shrink-0 flex-col bg-[#e8e8e8]">
          <div className="mt-[373px] h-[100px] bg-[#6c757d]" />
        </div>
        <Canvas />
      </div>
      <Dialog />
      {/* red annotation arrows */}
      <svg width="1398" height="778" viewBox="0 0 1398 778" className="pointer-events-none absolute top-0 left-0">
        <path d="M435 80L450 75L449 80L509 95L447 88L446 91Z" fill="#f5221b" />
        <path d="M158 423L148 440L152 441L141 458L137 438L142 439Z" fill="#f5221b" />
        <path d="M833 258L852 297L857 294L856 312L842 301L847 299Z" fill="#f5221b" />
      </svg>
    </div>
  )
}
